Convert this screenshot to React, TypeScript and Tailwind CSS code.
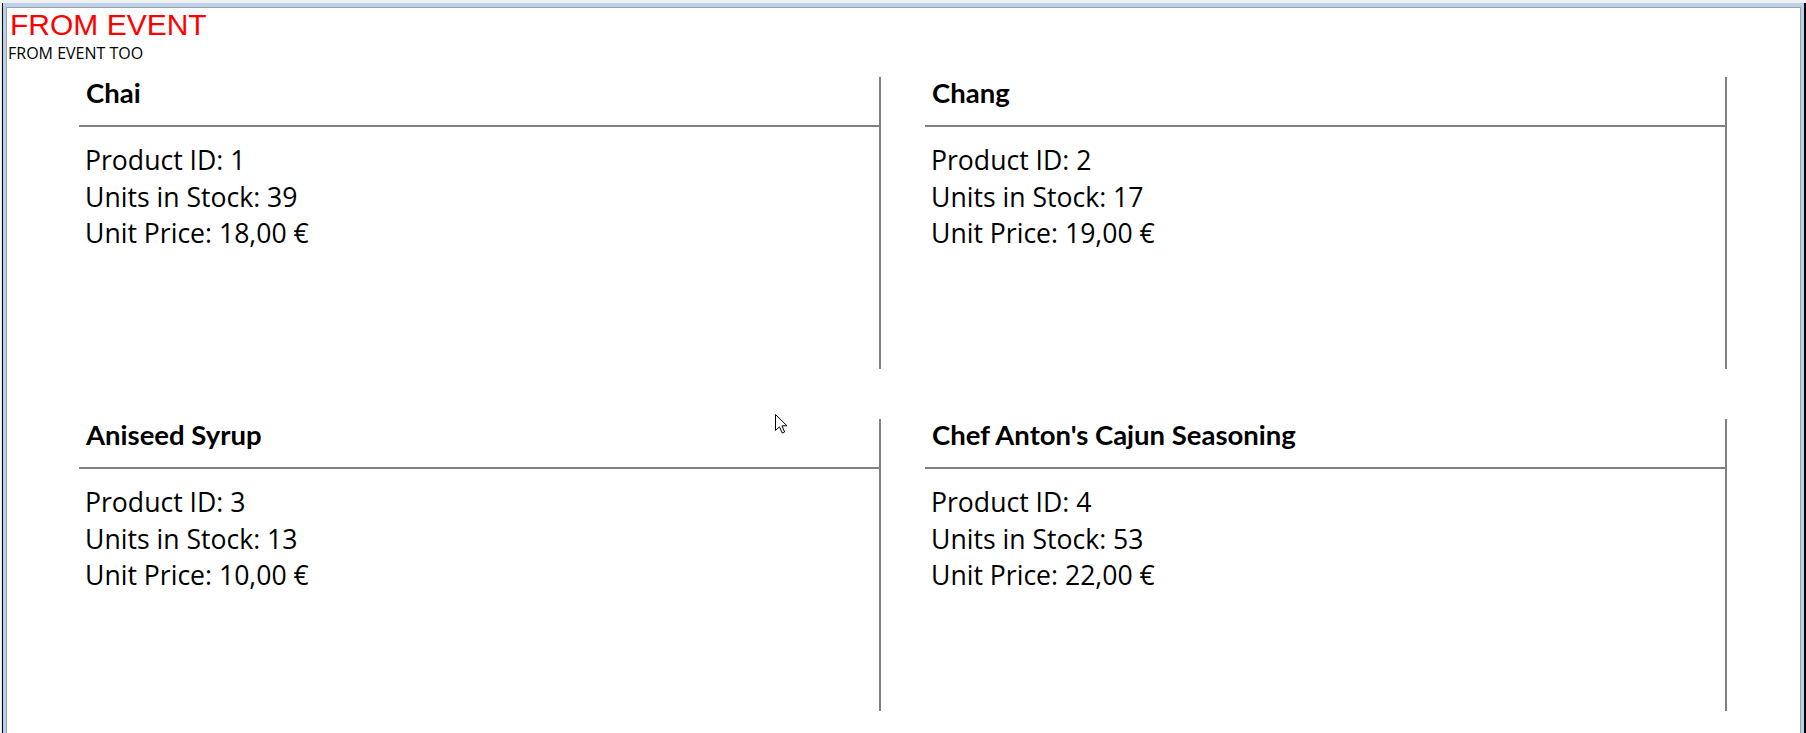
type Product = { id: number; name: string; stock: number; price: string };

const PRODUCTS: Product[] = [
  { id: 1, name: 'Chai', stock: 39, price: '18,00 €' },
  { id: 2, name: 'Chang', stock: 17, price: '19,00 €' },
  { id: 3, name: 'Aniseed Syrup', stock: 13, price: '10,00 €' },
  { id: 4, name: "Chef Anton's Cajun Seasoning", stock: 53, price: '22,00 €' },
];

function ProductCard({ product }: { product: Product }) {
  return (
    <div className="h-[292px] border-r-2 border-[#808080]">
      <div className="h-[50px] border-b-2 border-[#808080] pl-[7px] font-['Lato',sans-serif] text-[27.5px] font-bold leading-[32px] text-black">
        {product.name}
      </div>
      <div className="pl-[6px] pt-[15px] font-['Open_Sans',sans-serif] text-[26.6px] leading-[36.67px] text-black">
        <div>Product ID: {product.id}</div>
        <div>Units in Stock: {product.stock}</div>
        <div>Unit Price: {product.price}</div>
      </div>
    </div>
  );
}

function Cursor() {
  return (
    <svg
      className="pointer-events-none absolute left-[775px] top-[414px]"
      width="13"
      height="20"
      viewBox="0 0 13 20"
    >
      <path
        d="M0.5 0.5 L0.5 16.5 L4.5 12.8 L7.2 19 L9.6 18 L7 11.8 L12 11.8 Z"
        fill="white"
        stroke="black"
        strokeWidth="1"
        strokeLinejoin="miter"
      />
    </svg>
  );
}

export default function App() {
  return (
    <div className="relative h-[733px] w-[1806px] overflow-hidden bg-[#f0f0f0] pt-[3px] pl-[2px]">
      <div className="h-[730px] border-l border-r-2 border-black">
        <div className="h-full border-l-[3px] border-r-[3px] border-t-4 border-[#b9d1ea]">
          <div className="h-full border-l border-r border-t border-[#a0a0a0] bg-white pl-[1px]">
            <div className="ml-[2px] font-['Liberation_Sans',Arial,sans-serif] text-[30px] leading-[34px] text-[#ff0000]">
              FROM EVENT
            </div>
            <div className="mt-[2px] font-['Open_Sans',sans-serif] text-[16px] leading-[18px] text-black">
              FROM EVENT TOO
            </div>
            <div className="mt-[15px] grid grid-cols-[802px_802px] gap-x-[44px] gap-y-[50px] pl-[71px]">
              {PRODUCTS.map((p) => (
                <ProductCard key={p.id} product={p} />
              ))}
            </div>
          </div>
        </div>
      </div>
      <Cursor />
    </div>
  );
}
